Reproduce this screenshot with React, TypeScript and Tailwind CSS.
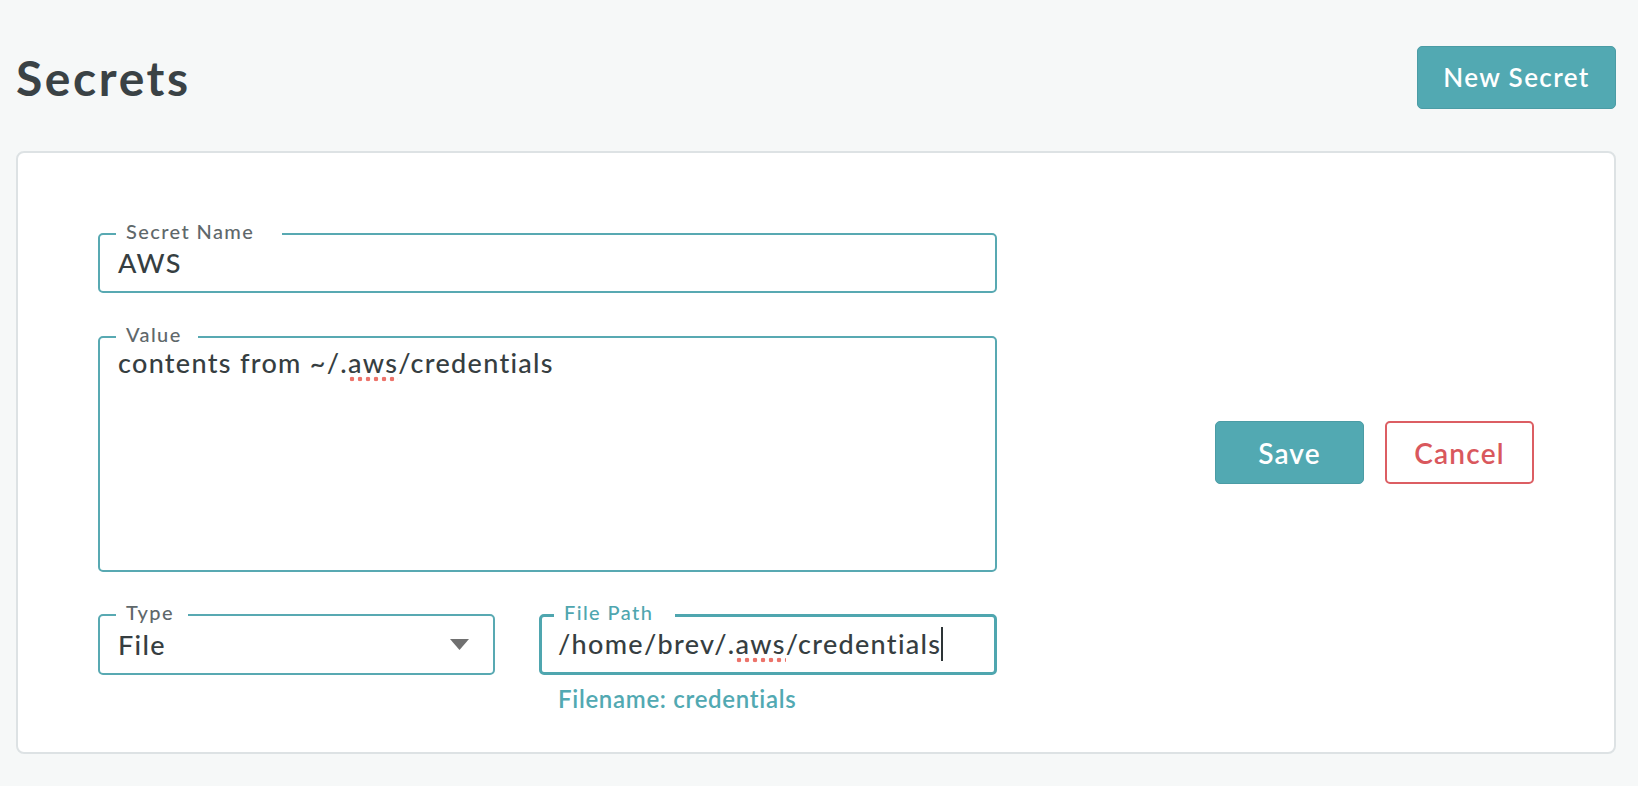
import type { ReactNode } from "react";
import clsx from "clsx";

function Field({
  label,
  legendClass,
  focused,
  className,
  children,
}: {
  label: string;
  legendClass: string;
  focused?: boolean;
  className?: string;
  children: ReactNode;
}) {
  return (
    <fieldset
      className={clsx(
        "min-w-0 rounded-[5px] bg-white",
        focused ? "border-[3px] border-[#4fa6af]" : "border-2 border-[#58a9b2]",
        className,
      )}
    >
      <legend
        className={clsx(
          "pb-[5px] pl-[10px] text-[20px] leading-[19px] tracking-[1.4px]",
          focused ? "text-[#4fa6af]" : "text-[#5f686b]",
          legendClass,
        )}
      >
        {label}
      </legend>
      {children}
    </fieldset>
  );
}

// red dotted spell-check mark under a word
function Misspelled({ children }: { children: ReactNode }) {
  return (
    <span className="bg-[radial-gradient(circle,#ec736a_2px,transparent_2.6px)] bg-[length:8px_6px] bg-[position:left_bottom] bg-repeat-x pb-[3px]">
      {children}
    </span>
  );
}

export default function App() {
  return (
    <div className="min-h-screen bg-[#f6f8f8] pt-[46px] pr-[22px] pb-[32px] pl-4 [font-family:Lato,sans-serif] text-[#363e41]">
      <div className="flex h-[63px] items-center justify-between">
        <h1 className="text-[48px] leading-[48px] font-bold tracking-[2.6px] text-[#3a4245]">Secrets</h1>
        <button className="h-[63px] w-[199px] rounded-[5px] border border-[#4b9ca5] bg-[#52a9b2] text-[26px] font-semibold tracking-[1.4px] text-white">
          New Secret
        </button>
      </div>

      <div className="mt-[42px] flex h-[603px] rounded-lg border-2 border-[#dde2e4] bg-white pt-[69px] pr-[80px] pl-[80px]">
        <div className="flex w-[899px] flex-col text-[27px] font-medium tracking-[1.3px]">
          <Field label="Secret Name" legendClass="ml-[16px] w-[166px]" className="h-[71px]">
            <div className="h-[45px] pt-[1px] pl-[18px] leading-[32px]">AWS</div>
          </Field>

          <Field label="Value" legendClass="ml-[16px] w-[82px]" className="mt-[32px] h-[247px]">
            <div className="pt-[3px] pl-[18px] leading-[22px]">
              contents from ~/.<Misspelled>aws</Misspelled>/credentials
            </div>
          </Field>

          <div className="mt-[31px] flex items-start gap-[44px]">
            <Field label="Type" legendClass="ml-[16px] w-[72px]" className="h-[72px] w-[397px]">
              <div className="flex h-[46px] items-start justify-between pt-[2px] pr-[24px] pl-[18px]">
                <span className="leading-[32px]">File</span>
                <svg width="19" height="11" viewBox="0 0 19 11" className="mt-[10px]">
                  <polygon points="0,0 19,0 9.5,11" fill="#707070" />
                </svg>
              </div>
            </Field>

            <div className="flex flex-1 flex-col">
              <Field label="File Path" legendClass="ml-[12px] w-[121px]" focused className="h-[72px]">
                <div className="flex h-[45px] items-start pt-[1px] pl-[16px] leading-[32px]">
                  <span>
                    /home/brev/.<Misspelled>aws</Misspelled>/credentials
                  </span>
                  <span className="mt-[-1px] inline-block h-[34px] w-[2px] bg-[#2d3436]" />
                </div>
              </Field>
              <div className="mt-[12px] pl-[19px] text-[24px] leading-[24px] font-semibold tracking-[0.7px] text-[#52a9b2]">
                Filename: credentials
              </div>
            </div>
          </div>
        </div>

        <div className="-mt-[69px] ml-auto flex gap-[21px] self-center">
          <button className="h-[63px] w-[149px] rounded-[5px] border border-[#4b9ca5] bg-[#52a9b2] text-[28px] font-semibold tracking-[1.2px] text-white">
            Save
          </button>
          <button className="h-[63px] w-[149px] rounded-[5px] border-2 border-[#dc5e63] bg-white text-[28px] font-semibold tracking-[1.2px] text-[#d9585d]">
            Cancel
          </button>
        </div>
      </div>
    </div>
  );
}
